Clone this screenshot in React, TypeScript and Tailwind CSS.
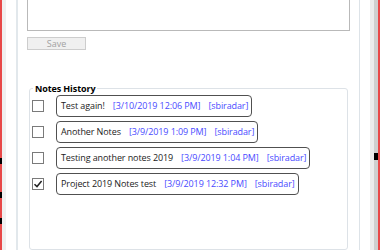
import React from 'react'

type Note = { title: string; date: string; user: string; done: boolean }

const notes: Note[] = [
  { title: 'Test again!', date: '[3/10/2019 12:06 PM]', user: '[sbiradar]', done: false },
  { title: 'Another Notes', date: '[3/9/2019 1:09 PM]', user: '[sbiradar]', done: false },
  { title: 'Testing another notes 2019', date: '[3/9/2019 1:04 PM]', user: '[sbiradar]', done: false },
  { title: 'Project 2019 Notes test', date: '[3/9/2019 12:32 PM]', user: '[sbiradar]', done: true },
]

const font = { fontFamily: '"Open Sans", "Noto Sans", Arial, sans-serif' }

function CheckBox({ checked }: { checked: boolean }) {
  return (
    <div className="w-[12px] h-[12px] shrink-0 border border-[#7a7a7a] bg-white flex items-center justify-center">
      {checked && (
        <svg width="10" height="10" viewBox="0 0 10 10">
          <path d="M1.5 5.2 L4 7.6 L8.6 2" fill="none" stroke="#222" strokeWidth="1.5" />
        </svg>
      )}
    </div>
  )
}

function NoteRow({ note }: { note: Note }) {
  return (
    <div className="flex items-center h-[22px]">
      <CheckBox checked={note.done} />
      <div className="ml-[12px] h-[22px] flex items-center gap-[8px] pl-[4px] pr-[3px] border-[1.5px] border-[#505050] rounded-[4px] text-[9px] tracking-[-0.1px] whitespace-nowrap">
        <span className="text-[#222]">{note.title}</span>
        <span className="text-[#4a4aff]">{note.date}</span>
        <span className="text-[#4a4aff]">{note.user}</span>
      </div>
    </div>
  )
}

export default function App() {
  return (
    <div className="w-[380px] h-[250px] overflow-hidden flex bg-white" style={font}>
      {/* left window edge */}
      <div className="w-[2px] bg-[#e84848] flex flex-col">
        <div className="h-[158px]" />
        <div className="h-[6px] bg-black" />
        <div className="h-[28px]" />
        <div className="h-[6px] bg-black" />
        <div className="h-[20px]" />
        <div className="h-[6px] bg-black" />
      </div>
      <div className="w-[4px] bg-[#f0f0f0]" />
      <div className="w-[10px]" />
      <div className="w-[2px] bg-[#e2e8ec]" />

      {/* main panel */}
      <div className="w-[341px] flex flex-col">
        <div className="ml-[9px] w-[323px] h-[37px] border-x border-b border-[#b9b9b9] bg-white" />
        <button className="ml-[9px] mt-[6px] w-[59px] h-[15px] border border-[#cdcdcd] bg-[#f0f0f0] text-[9px] text-[#a2a2a2] leading-none">
          Save
        </button>

        <fieldset className="ml-[11px] mt-[34px] w-[319px] h-[200px] border border-[#dde2e7] rounded-[3px] px-[2px]">
          <legend className="ml-[1px] px-[2px] text-[9px] font-bold text-black leading-none tracking-[-0.1px]">
            Notes History
          </legend>
          <div className="flex flex-col gap-[4px] pt-[2px]">
            {notes.map((n) => (
              <NoteRow key={n.title} note={n} />
            ))}
          </div>
        </fieldset>
      </div>

      {/* right edge */}
      <div className="w-[1px] bg-[#dde3e8]" />
      <div className="w-[10px]" />
      <div className="w-[4px] bg-[#ececec]" />
      <div className="w-[4px] bg-[#cfcfcf] flex flex-col">
        <div className="h-[153px]" />
        <div className="h-[7px] bg-black" />
      </div>
      <div className="w-[2px] bg-[#e84848]" />
    </div>
  )
}
